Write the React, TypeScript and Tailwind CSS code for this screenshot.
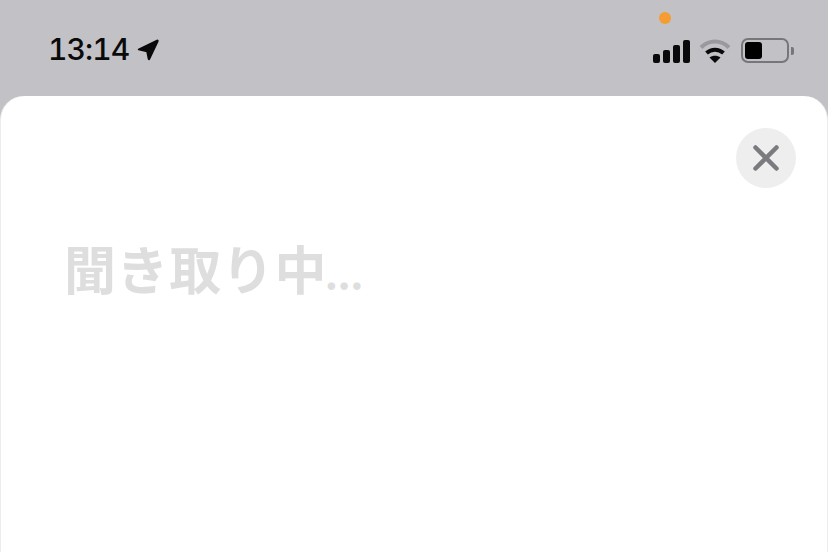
import React from "react";

function LocationArrow() {
  return (
    <svg width="22" height="22" viewBox="0 0 22 22" className="ml-[8px] mt-[1px]">
      <path d="M1.5 10.5 L20 1.5 Q21.3 1 20.8 2.5 L12.5 20 Q12 21 11.5 20 L10 12.5 Z" fill="#0a0a0a" stroke="#0a0a0a" strokeWidth="1.5" strokeLinejoin="round" />
    </svg>
  );
}

function Signal() {
  return (
    <div className="flex items-end gap-[3px] h-[24px] -mr-[1px]">
      <div className="w-[7px] h-[9px] rounded-[2px] bg-[#0a0a0a]" />
      <div className="w-[7px] h-[13px] rounded-[2px] bg-[#0a0a0a]" />
      <div className="w-[7px] h-[18px] rounded-[2px] bg-[#0a0a0a]" />
      <div className="w-[7px] h-[23px] rounded-[2px] bg-[#0a0a0a]" />
    </div>
  );
}

function Wifi() {
  return (
    <svg width="32" height="24" viewBox="0 0 32 24" fill="none" strokeLinecap="butt">
      <path d="M2 8.5 C10 0.5 22 0.5 30 8.5" stroke="#9a999d" strokeWidth="4" />
      <path d="M7.5 14 C12.5 9.5 19.5 9.5 24.5 14" stroke="#0a0a0a" strokeWidth="4" />
      <path d="M16 24 L10.5 18.5 C13.5 16 18.5 16 21.5 18.5 Z" fill="#0a0a0a" />
    </svg>
  );
}

function Battery() {
  return (
    <div className="flex items-center">
      <div className="w-[48px] h-[25px] rounded-[7px] border-2 border-[#77767a] p-[2px]">
        <div className="w-[17px] h-full rounded-[3px] bg-black" />
      </div>
      <div className="ml-[2px] w-[3px] h-[8px] rounded-r-[2px] bg-[#77767a]" />
    </div>
  );
}

export default function App() {
  return (
    <div className="relative w-[828px] h-[552px] overflow-hidden bg-[#c2c1c6] flex flex-col font-['Inter','Liberation_Sans',sans-serif]">
      <div className="h-[96px] shrink-0 flex items-start justify-between pl-[48px] pr-[34px] pt-[33px]">
        <div className="flex items-center h-[33px]">
          <span className="text-[30px] leading-[33px] font-medium tabular-nums tracking-[-0.9px] text-[#0a0a0a]">13:14</span>
          <LocationArrow />
        </div>
        <div className="flex items-center gap-[10px] mt-[5px]">
          <Signal />
          <Wifi />
          <Battery />
        </div>
      </div>
      {/* camera-in-use dot */}
      <div className="absolute left-[659px] top-[12px] w-[12px] h-[12px] rounded-full bg-[#f59c33]" />

      <div className="flex-1 rounded-t-[24px] bg-white border-x border-[#ececee] pl-[63px] pr-[31px] pt-[32px]">
        <div className="flex justify-end">
          <button className="w-[60px] h-[60px] rounded-full bg-[#eeeeee] flex items-center justify-center">
            <svg width="26" height="26" viewBox="0 0 26 26" fill="none" className="-ml-[1px] -mt-[1px]">
              <path d="M2.5 2.5 L23.5 23.5 M23.5 2.5 L2.5 23.5" stroke="#7b7b7f" strokeWidth="4.5" strokeLinecap="round" />
            </svg>
          </button>
        </div>
        <div className="mt-[48px] text-[52px] leading-[64px] font-bold tracking-[0.6px] text-[#dedede] font-['Noto_Sans_CJK_JP',sans-serif]">
          聞き取り中<span className="-ml-[3px] font-['Inter',sans-serif] text-[44px] tracking-[-2px]">...</span>
        </div>
      </div>
    </div>
  );
}
